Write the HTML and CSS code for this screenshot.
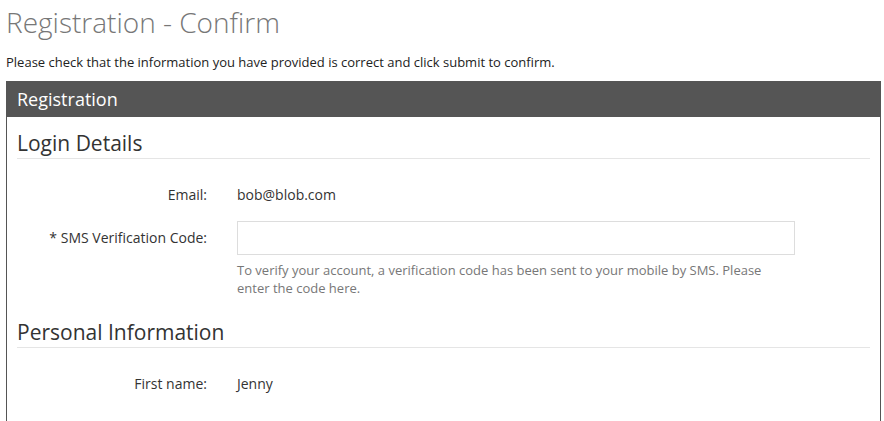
FILE: index.html
```html
<!DOCTYPE html>
<html lang="en">
<head>
<meta charset="utf-8">
<title>Registration - Confirm</title>
<link rel="stylesheet" href="styles.css">
</head>
<body>
<div class="page">
  <h1 class="title">Registration - Confirm</h1>
  <p class="intro">Please check that the information you have provided is correct and click submit to confirm.</p>
  <div class="panel">
    <div class="panel-head">Registration</div>
    <div class="panel-body">
      <h3 class="section">Login Details</h3>
      <div class="row">
        <div class="label">Email:</div>
        <div class="value">bob@blob.com</div>
      </div>
      <div class="row">
        <div class="label">* SMS Verification Code:</div>
        <div class="value">
          <input class="field" type="text">
          <div class="help">To verify your account, a verification code has been sent to your mobile by SMS. Please enter the code here.</div>
        </div>
      </div>
      <h3 class="section">Personal Information</h3>
      <div class="row">
        <div class="label">First name:</div>
        <div class="value">Jenny</div>
      </div>
      <div class="row">
        <div class="label">Last name:</div>
        <div class="value">Smith</div>
      </div>
    </div>
  </div>
</div>
</body>
</html>
```

FILE: styles.css
```css
html, body {
  margin: 0;
  padding: 0;
  background: #fff;
  overflow: hidden;
}
body {
  font-family: "Open Sans", "Liberation Sans", sans-serif;
  color: #333;
}
.page {
  padding: 0 3px 0 6px;
}
.title {
  margin: 0;
  padding-top: 2px;
  font-size: 28px;
  font-weight: 300;
  line-height: 40px;
  color: #777;
}
.intro {
  margin: 10px 0 0;
  font-size: 13px;
  line-height: 20px;
  color: #222;
}
.panel {
  margin-top: 9px;
  border: 1px solid #555;
  border-top: none;
}
.panel-head {
  background: #555;
  color: #fff;
  font-size: 18px;
  line-height: 36px;
  margin: 0 -1px;
  padding: 0 10px 0 11px;
}
.panel-body {
  padding: 0 10px;
}
.section {
  margin: 0;
  padding-top: 11px;
  font-size: 21px;
  font-weight: 400;
  line-height: 30px;
  color: #333;
  border-bottom: 1px solid #e5e5e5;
}
.section + .row {
  margin-top: 19px;
}
.row {
  display: grid;
  grid-template-columns: 190px 558px;
  column-gap: 30px;
  font-size: 14px;
  line-height: 34px;
  margin-bottom: 9px;
}
.label {
  text-align: right;
  color: #333;
}
.value {
  color: #333;
}
.field {
  display: block;
  box-sizing: border-box;
  width: 558px;
  height: 34px;
  margin: 0;
  border: 1px solid #ddd;
  background: #fff;
  padding: 0 8px;
  font: inherit;
}
.help {
  margin-top: 6px;
  font-size: 13px;
  line-height: 18px;
  color: #777;
  max-width: 540px;
}
```
